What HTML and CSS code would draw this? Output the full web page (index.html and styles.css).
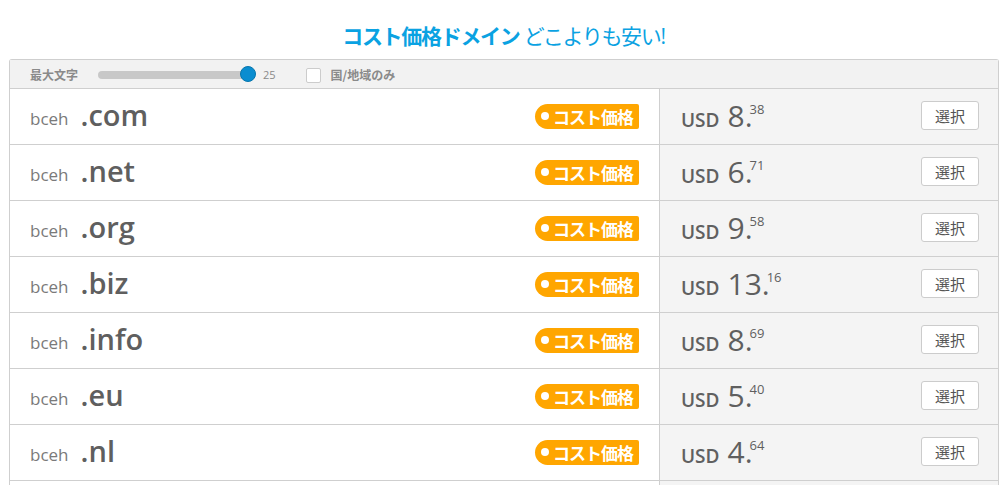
FILE: index.html
```html
<!DOCTYPE html>
<html lang="ja">
<head>
  <meta charset="UTF-8">
  <title>コスト価格ドメイン</title>
  <link rel="stylesheet" href="styles.css">
</head>
<body>
<h2 class="title"><strong>コスト価格ドメイン</strong> どこよりも安い!</h2>

<div class="domain-table">

  <!-- filter bar -->
  <div class="filters">
    <span class="filter-label">最大文字</span>
    <div class="slider">
      <div class="slider-track"></div>
      <div class="slider-thumb"></div>
    </div>
    <span class="slider-value">25</span>
    <label class="check">
      <span class="check-box"></span>
      <span class="filter-label">国/地域のみ</span>
    </label>
  </div>

  <!-- domain rows -->
  <div class="row">
    <div class="name"><span class="sld">bceh</span><span class="tld">.com</span><span class="badge">コスト価格</span></div>
    <div class="price"><span class="cur">USD</span><span class="amount">8.</span><sup>38</sup><button class="select" type="button">選択</button></div>
  </div>
  <div class="row">
    <div class="name"><span class="sld">bceh</span><span class="tld">.net</span><span class="badge">コスト価格</span></div>
    <div class="price"><span class="cur">USD</span><span class="amount">6.</span><sup>71</sup><button class="select" type="button">選択</button></div>
  </div>
  <div class="row">
    <div class="name"><span class="sld">bceh</span><span class="tld">.org</span><span class="badge">コスト価格</span></div>
    <div class="price"><span class="cur">USD</span><span class="amount">9.</span><sup>58</sup><button class="select" type="button">選択</button></div>
  </div>
  <div class="row">
    <div class="name"><span class="sld">bceh</span><span class="tld">.biz</span><span class="badge">コスト価格</span></div>
    <div class="price"><span class="cur">USD</span><span class="amount">13.</span><sup>16</sup><button class="select" type="button">選択</button></div>
  </div>
  <div class="row">
    <div class="name"><span class="sld">bceh</span><span class="tld">.info</span><span class="badge">コスト価格</span></div>
    <div class="price"><span class="cur">USD</span><span class="amount">8.</span><sup>69</sup><button class="select" type="button">選択</button></div>
  </div>
  <div class="row">
    <div class="name"><span class="sld">bceh</span><span class="tld">.eu</span><span class="badge">コスト価格</span></div>
    <div class="price"><span class="cur">USD</span><span class="amount">5.</span><sup>40</sup><button class="select" type="button">選択</button></div>
  </div>
  <div class="row">
    <div class="name"><span class="sld">bceh</span><span class="tld">.nl</span><span class="badge">コスト価格</span></div>
    <div class="price"><span class="cur">USD</span><span class="amount">4.</span><sup>64</sup><button class="select" type="button">選択</button></div>
  </div>
  <!-- next row, below the fold -->
  <div class="row">
    <div class="name"></div>
    <div class="price"></div>
  </div>
</div>
</body>
</html>
```

FILE: styles.css
```css
:root{
  --blue: #0aa2e2;
  --line: #cfcfcf;
  --text: #5a5a5a;
  --muted: #8a8a8a;
  --orange: #ffa600;
}

body{
  margin: 0;
  font-family: 'Open Sans', 'Noto Sans CJK JP', sans-serif;
  color: var(--text);
  background: #fff;
}

.title{
  margin: 0;
  height: 59px;
  box-sizing: border-box;
  padding-top: 22px;
  text-align: center;
  font-size: 21px;
  line-height: 28px;
  font-weight: 400;
  color: var(--blue);
  letter-spacing: -1.3px;
}

.title strong{
  font-weight: 700;
}

.domain-table{
  margin: 0 8px 0 9px;
  border: 1px solid var(--line);
  border-bottom: none;
  border-radius: 3px 3px 0 0;
}

/* filter bar */
.filters{
  display: flex;
  align-items: center;
  height: 28px;
  padding-left: 20px;
  background: #f2f2f2;
  border-bottom: 1px solid var(--line);
  font-size: 11px;
  color: var(--muted);
}

.filter-label{
  font-family: 'Noto Sans CJK JP', sans-serif;
  font-size: 12px;
  font-weight: 700;
}

.slider{
  position: relative;
  width: 158px;
  height: 16px;
  margin-left: 20px;
}

.slider-track{
  margin-top: 5px;
  height: 8px;
  width: 150px;
  border-radius: 4px;
  background: #c8c8c8;
}

.slider-thumb{
  position: absolute;
  top: 0;
  left: 142px;
  width: 14px;
  height: 14px;
  border-radius: 50%;
  background: #0a8dd0;
  border: 1px solid #0676ad;
}

.slider-value{
  margin-left: 7px;
}

.check{
  display: flex;
  align-items: center;
  margin-left: 30px;
}

.check-box{
  width: 13px;
  height: 13px;
  background: #fff;
  border: 1px solid #ccc;
  border-radius: 2px;
  margin-right: 10px;
  margin-top: 2px;
}

/* rows */
.row{
  display: flex;
  height: 55px;
  border-bottom: 1px solid var(--line);
}

.name{
  display: flex;
  align-items: center;
  box-sizing: border-box;
  width: 650px;
  padding: 0 20px 0 20px;
  border-right: 1px solid var(--line);
  background: #fff;
}

.sld{
  font-size: 17px;
  color: #7a7a7a;
  margin-top: 3px;
}

.tld{
  margin-left: 12px;
  font-size: 29px;
  font-weight: 600;
  color: #5f5f5f;
  margin-top: -4px;
}

.badge{
  margin-left: auto;
  display: flex;
  align-items: center;
  height: 25px;
  padding: 0 6px 0 6px;
  border-radius: 13px 2px 2px 13px;
  background: var(--orange);
  color: #fff;
  font-family: 'Noto Sans CJK JP', sans-serif;
  font-size: 17px;
  font-weight: 700;
  letter-spacing: -1px;
  margin-top: -1px;
}

.badge::before{
  content: '';
  width: 8px;
  height: 8px;
  border-radius: 50%;
  background: #fff;
  margin-right: 4px;
}

.price{
  flex: 1;
  display: flex;
  align-items: center;
  padding: 0 19px 0 21px;
  background: #f4f4f4;
}

.cur{
  font-size: 19px;
  font-weight: 600;
  color: #606060;
  margin-top: 7px;
}

.amount{
  margin-left: 8px;
  font-size: 30px;
  font-weight: 400;
  color: #5f5f5f;
  margin-top: -2px;
}

.price sup{
  font-size: 13px;
  align-self: flex-start;
  margin-top: 11px;
  margin-left: -3px;
  color: #5f5f5f;
}

.select{
  margin-left: auto;
  width: 58px;
  height: 29px;
  background: #fff;
  border: 1px solid #ccc;
  border-radius: 3px;
  font-family: 'Noto Sans CJK JP', sans-serif;
  font-size: 15px;
  color: #555;
  margin-top: -2px;
}
```
